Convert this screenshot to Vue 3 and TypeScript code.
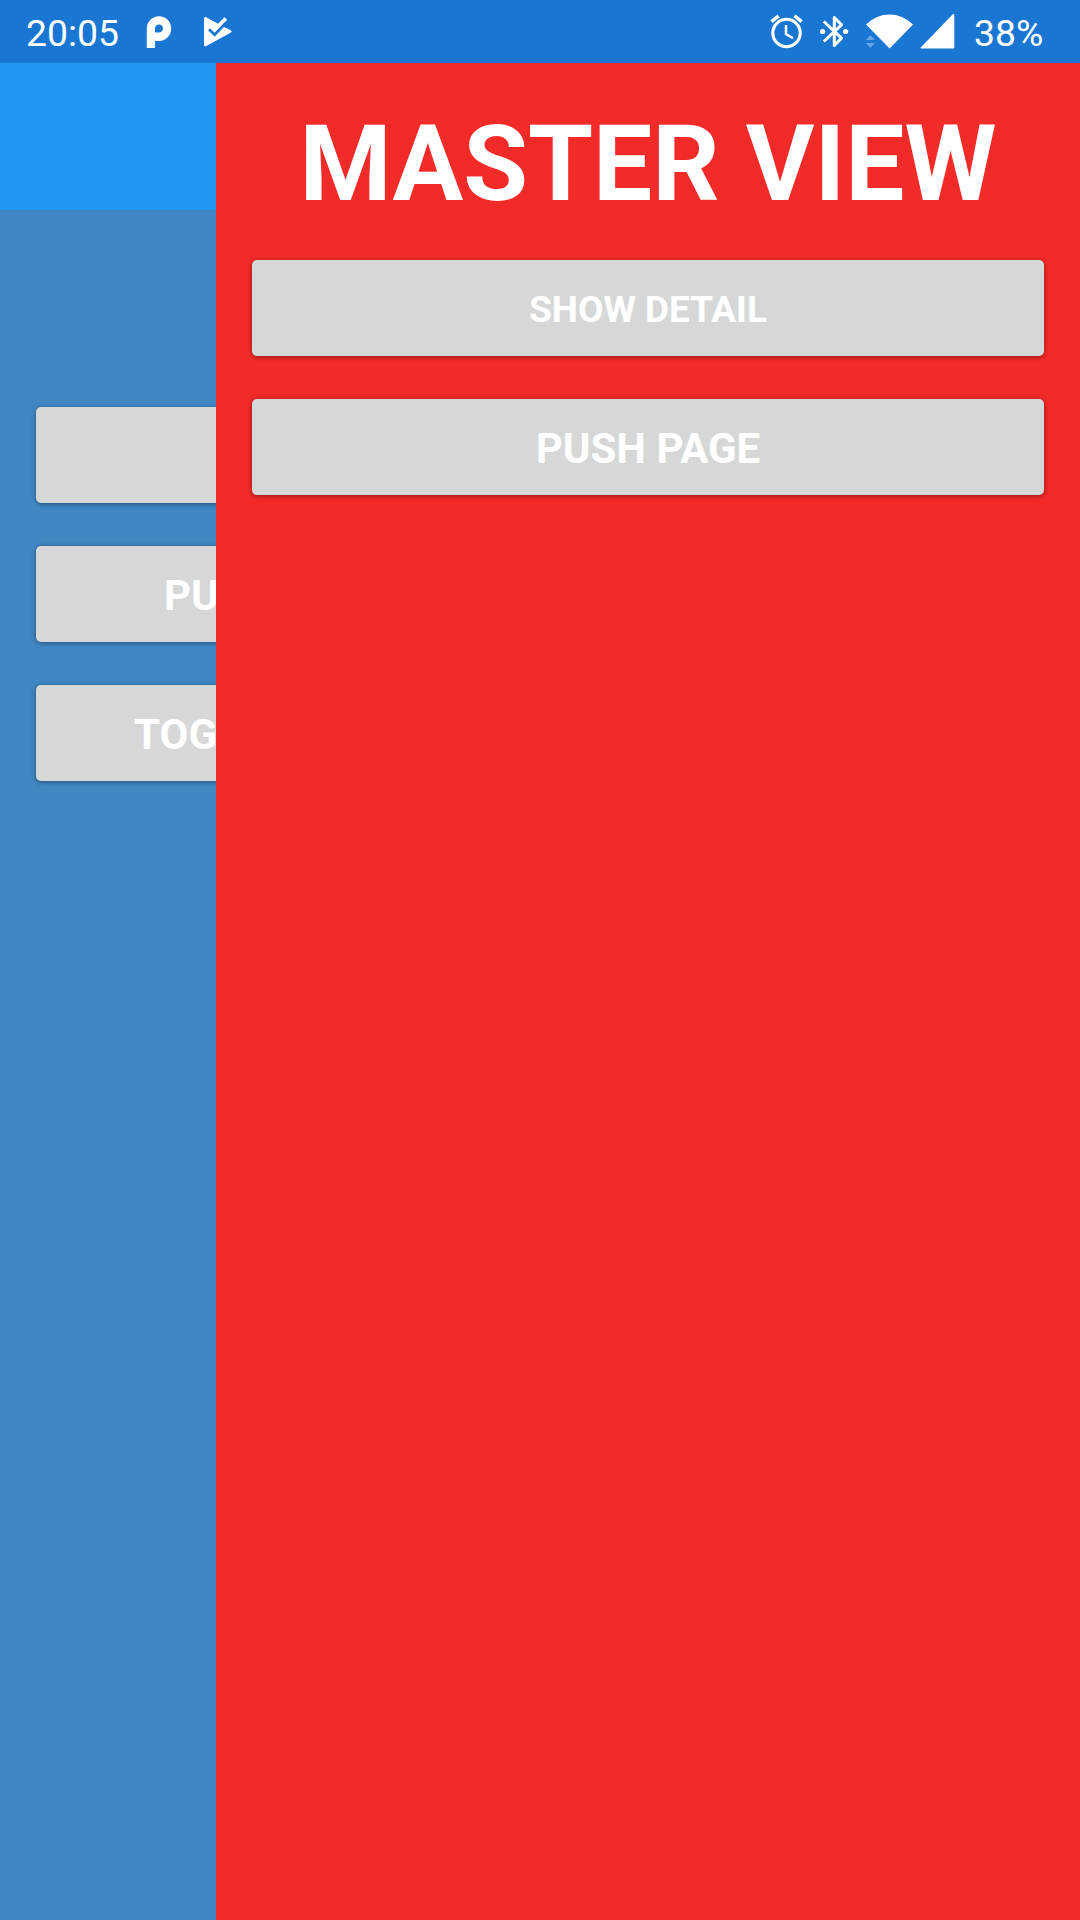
<script setup lang="ts">
interface ActionButton {
  label: string
  small?: boolean
  inset?: number
}

const masterActions: ActionButton[] = [
  { label: 'SHOW DETAIL', small: true },
  { label: 'PUSH PAGE' },
]

const detailActions: ActionButton[] = [
  { label: '' },
  { label: 'PU', inset: 128 },
  { label: 'TOG', inset: 98 },
]
</script>

<template>
  <div class="screen">
    <header class="status">
      <span class="clock">20:05</span>
      <svg class="parking" width="30" height="40" viewBox="144 10 30 40">
        <path fill="#fff" fill-rule="evenodd" d="M146.8 48V28.4A12.2 12.2 0 0 1 159 16.2C166 16.2 171.2 21.5 171.2 28.6S166 41 159 41H155V48ZM155 32.5V28.7A4 4 0 1 1 159 32.5Z" />
      </svg>
      <svg class="tasks" width="34" height="40" viewBox="201 10 34 40">
        <path fill="#fff" d="M204 18.5Q204 16.2 206 17.2L231 30.6Q232.5 31.6 231 32.6L206.3 45.9Q204 47 204 44.6Z" />
        <path fill="#1976d2" d="M219.4 24.4L227 16.5L232 21L225.5 27.7Z" />
        <path fill="#fff" d="M216.5 25.5L224.4 17.3L227.2 19.8L214.6 33L211.5 29.5Z" />
        <path fill="none" stroke="#1976d2" stroke-width="2.8" d="M209 29.2L214.6 34.8L226.3 22.6" />
      </svg>
      <span class="spacer"></span>
      <svg class="alarm" width="36" height="40" viewBox="769 10 36 40">
        <g fill="none" stroke="#fff">
          <circle cx="786.5" cy="33" r="13.7" stroke-width="3.1" />
          <path stroke-width="3.5" d="M771.5 21.7L778.6 15.9M801.6 21.7L794.5 15.9" />
          <path stroke-width="2.5" d="M786 25V34L793 38.2" />
        </g>
      </svg>
      <svg class="bluetooth" width="34" height="40" viewBox="817 10 34 40">
        <path fill="none" stroke="#fff" stroke-width="3" stroke-linejoin="round" d="M823.8 21.5L841.5 38.2L834.3 45.4V17.6L841.5 24.8L823.8 41.5" />
        <circle cx="822.6" cy="31.5" r="2.6" fill="#fff" />
        <circle cx="845.6" cy="31.5" r="2.6" fill="#fff" />
      </svg>
      <svg class="network" width="94" height="40" viewBox="863 10 94 40">
        <path fill="#fff" d="M866 24.5Q876.5 14.6 889.5 14.6T913 24.5L889.6 48.5Z" />
        <path fill="#fff" d="M953 14Q954.3 13.5 954.3 15V47.2Q954.3 48.5 953 48.5H921.5Q920 48.5 921 47.2Z" />
        <path fill="#68a5e2" d="M865.8 40H875L870.4 35.2ZM865.8 43H875L870.4 47.8Z" />
      </svg>
      <span class="battery">38%</span>
    </header>
    <div class="panes">
      <section class="detail">
        <div class="toolbar"></div>
        <div class="detail-actions">
          <button v-for="(action, i) in detailActions" :key="i" class="action" :style="{ paddingLeft: `${action.inset ?? 0}px` }">
            {{ action.label }}
          </button>
        </div>
      </section>
      <section class="master">
        <h1>MASTER VIEW</h1>
        <div class="master-actions">
          <button v-for="action in masterActions" :key="action.label" class="action" :class="{ small: action.small }">
            {{ action.label }}
          </button>
        </div>
      </section>
    </div>
  </div>
</template>

<style>
body {
  margin: 0;
}
</style>

<style scoped>
.screen {
  width: 1080px;
  height: 1920px;
  display: flex;
  flex-direction: column;
  overflow: hidden;
  color: #fff;
  font-family: Roboto, sans-serif;
}

.status {
  box-sizing: border-box;
  height: 63px;
  flex: none;
  display: flex;
  align-items: flex-start;
  padding: 10px 37px 0 26px;
  background: #1976d2;
  font-size: 37.3px;
  line-height: 46px;
}

.status svg {
  flex: none;
  display: block;
}

.clock {
  width: 118px;
}

.tasks {
  margin-left: 27px;
}

.spacer {
  flex: 1;
}

.bluetooth {
  margin-left: 12px;
}

.network {
  margin-left: 12px;
}

.battery {
  width: 69px;
  margin-left: 17px;
  white-space: nowrap;
}

.panes {
  flex: 1;
  display: grid;
  grid-template-columns: 216px 864px;
}

.detail {
  overflow: hidden;
  background: #4087c4;
}

.toolbar {
  height: 147px;
  background: #2196f3;
}

.detail-actions {
  width: 700px;
  display: flex;
  flex-direction: column;
  gap: 43px;
  padding: 197px 0 0 36px;
}

.detail-actions .action {
  text-align: left;
}

.master {
  background: #f22b29;
}

h1 {
  height: 123px;
  margin: 40px 0 34px;
  font-size: 105.2px;
  line-height: 123px;
  font-weight: 700;
  text-align: center;
  white-space: nowrap;
}

.master-actions {
  display: flex;
  flex-direction: column;
  gap: 43px;
  padding: 0 36px;
}

.action {
  box-sizing: border-box;
  height: 96px;
  padding: 3px 0 0;
  border: 0;
  border-radius: 5px;
  background: #d6d8d7;
  box-shadow: 0 1px 5px rgba(0, 0, 0, 0.42);
  color: #fff;
  font: 700 42px/50px Roboto, sans-serif;
}

.action.small {
  font-size: 37px;
}
</style>
